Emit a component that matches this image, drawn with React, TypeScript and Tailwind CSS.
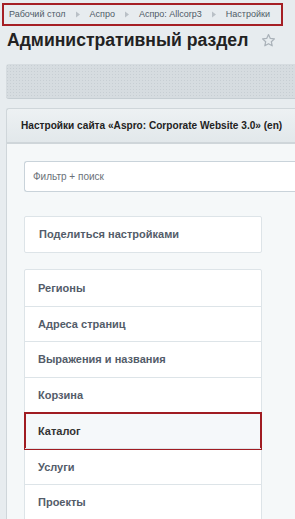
import React from "react";

const Arrow = () => (
  <svg width="4" height="7" viewBox="0 0 4 7" className="mx-[10px]">
    <path d="M0 0.5 L4 3.5 L0 6.5 Z" fill="#b9c0c6" />
  </svg>
);

const rows = ["Регионы", "Адреса страниц", "Выражения и названия", "Корзина", "Каталог", "Услуги", "Проекты"];

export default function App() {
  return (
    <div
      className="w-[295px] h-[519px] overflow-hidden bg-[#e7ecef] relative"
      style={{ fontFamily: '"Liberation Sans", Arial, sans-serif' }}
    >
      {/* breadcrumb */}
      <div className="ml-[2px] mt-[3px] w-[281px] h-[23px] border-2 border-[#a51f25] flex items-center pl-[5px] text-[9px] text-[#4f5b67] whitespace-nowrap">
        <span>Рабочий стол</span>
        <Arrow />
        <span>Аспро</span>
        <Arrow />
        <span>Аспро: Allcorp3</span>
        <Arrow />
        <span>Настройки</span>
      </div>
      {/* title */}
      <div className="flex items-center pl-[7px] mt-[1px] h-[26px] whitespace-nowrap">
        <span className="text-[17.6px] font-bold text-[#222]">Административный раздел</span>
        <svg width="15" height="15" viewBox="0 0 24 24" className="ml-[13px]">
          <path
            d="M12 2.5l2.9 6.2 6.6.7-5 4.5 1.4 6.6L12 17.1l-5.9 3.4 1.4-6.6-5-4.5 6.6-.7z"
            fill="none"
            stroke="#aab2b9"
            strokeWidth="2"
            strokeLinejoin="round"
          />
        </svg>
      </div>
      {/* dotted bar */}
      <div
        className="ml-[6px] mt-[11px] h-[35px] rounded-l-[3px] bg-[#d6dce0] border-b border-[#c5cdd2]"
        style={{
          backgroundImage: "radial-gradient(#c7ced3 0.6px, transparent 0.7px)",
          backgroundSize: "3px 3px",
        }}
      />
      {/* settings header */}
      <div className="ml-[6px] mt-[9px] h-[35px] flex items-center pl-[14px] bg-gradient-to-b from-[#edf1f3] to-[#e2e8eb] border border-r-0 border-[#cfd6da] rounded-tl-[3px] whitespace-nowrap text-[10.1px] font-bold text-[#222]">
        Настройки сайта «Aspro: Corporate Website 3.0» (en)
      </div>
      {/* content */}
      <div className="ml-[6px] bg-[#f5f8f9] border-l border-t border-[#cfd6da] pl-[17px] pt-[17px] h-[400px]">
        <div className="h-[31px] bg-white border border-r-0 border-[#c9d3da] rounded-l-[3px] flex items-center pl-[8px] text-[10px] text-[#6b7178]">
          Фильтр + поиск
        </div>
        <div className="mt-[24px] w-[238px] h-[37px] bg-white border border-[#dde4e8] rounded-[2px] flex items-center pl-[14px] text-[11px] font-bold text-[#535c69]">
          Поделиться настройками
        </div>
        <div className="mt-[16px] w-[238px] bg-white border border-[#dde4e8] rounded-t-[2px]">
          {rows.map((r) => {
            const sel = r === "Каталог";
            return (
              <div
                key={r}
                className={
                  "relative h-[35.7px] border-t border-[#dde4e8] first:border-t-0 flex items-center pl-[13px] text-[11px] font-bold " +
                  (sel ? "bg-[#f5f8fa] text-[#333]" : "text-[#535c69]")
                }
              >
                {r}
                {sel && (
                  <div className="absolute -left-px -right-px -top-[2px] -bottom-[2px] border-2 border-[#a01c22] pointer-events-none" />
                )}
              </div>
            );
          })}
        </div>
      </div>
    </div>
  );
}
